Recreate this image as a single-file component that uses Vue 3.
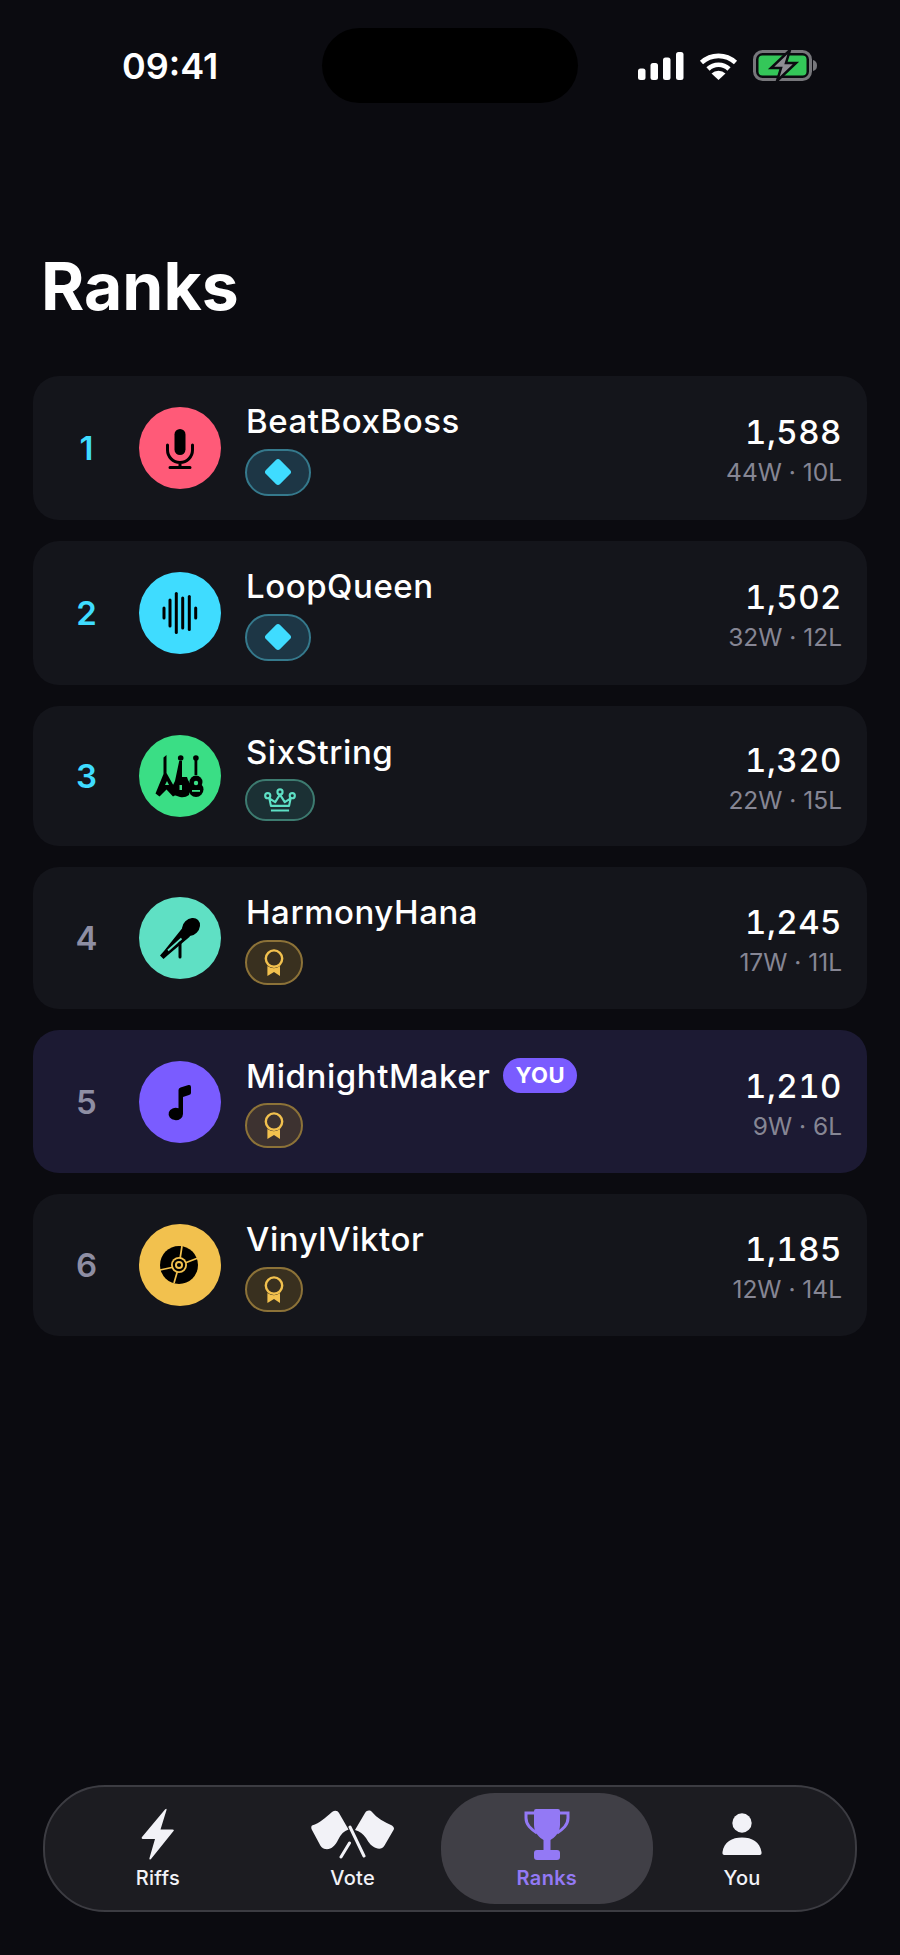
<script setup>
const players = [
  { rank: 1, name: 'BeatBoxBoss', score: '1,588', record: '44W · 10L', color: '#ff5a78', icon: 'mic', badge: 'diamond', height: 144, top: true },
  { rank: 2, name: 'LoopQueen', score: '1,502', record: '32W · 12L', color: '#3fdcff', icon: 'wave', badge: 'diamond', height: 144, top: true },
  { rank: 3, name: 'SixString', score: '1,320', record: '22W · 15L', color: '#3ade85', icon: 'guitars', badge: 'crown', height: 140, top: true },
  { rank: 4, name: 'HarmonyHana', score: '1,245', record: '17W · 11L', color: '#5fe0c4', icon: 'handmic', badge: 'medal', height: 142 },
  { rank: 5, name: 'MidnightMaker', score: '1,210', record: '9W · 6L', color: '#7a5cff', icon: 'note', badge: 'medal', height: 143, me: true },
  { rank: 6, name: 'VinylViktor', score: '1,185', record: '12W · 14L', color: '#f2c14e', icon: 'disc', badge: 'medal', height: 142 },
];

const waveBars = [
  { x: 25, h: 5 },
  { x: 31, h: 13 },
  { x: 37.3, h: 19.5 },
  { x: 43.7, h: 15 },
  { x: 50.3, h: 16.5 },
  { x: 56.7, h: 5 },
];
</script>

<template>
  <div class="page">
    <header class="status">
      <span class="time">09:41</span>
      <div class="island"></div>
      <div class="status-icons">
        <svg width="46" height="28" viewBox="0 0 46 28" fill="#fff">
          <rect x="0" y="16.5" width="7.5" height="11.5" rx="2.5" />
          <rect x="12.5" y="11" width="7.5" height="17" rx="2.5" />
          <rect x="25" y="5.5" width="7.5" height="22.5" rx="2.5" />
          <rect x="38" y="0" width="7.5" height="28" rx="2.5" />
        </svg>
        <svg class="wifi" width="39" height="28" viewBox="0 0 39 28" fill="none" stroke="#fff" stroke-width="4.6">
          <path d="M2.5 10.5A25 25 0 0 1 36.5 10.5" />
          <path d="M9 17A15 15 0 0 1 30 17" />
          <path d="M19.5 28L12.5 21.5A10 10 0 0 1 26.5 21.5Z" fill="#fff" stroke="none" />
        </svg>
        <svg class="battery" width="64" height="31" viewBox="0 0 64 31">
          <rect x="1.5" y="1.5" width="56" height="28" rx="8" fill="none" stroke="#77777b" stroke-width="3" />
          <rect x="5.5" y="5.5" width="48" height="20" rx="4" fill="#34c759" />
          <path d="M60 10Q64 11 64 15.5Q64 20 60 21Z" fill="#77777b" />
          <path d="M37 0L18 18H28L24 31L43 13H33Z" fill="#8e8e93" stroke="#0b0b10" stroke-width="2.5" />
        </svg>
      </div>
    </header>

    <h1 class="title">Ranks</h1>

    <main class="list">
      <div
        v-for="p in players"
        :key="p.rank"
        class="row"
        :class="{ 'row-me': p.me }"
        :style="{ minHeight: p.height + 'px' }"
      >
        <span class="rank" :class="{ 'rank-top': p.top }">{{ p.rank }}</span>

        <div class="avatar" :style="{ background: p.color }">
          <svg width="82" height="82" viewBox="0 0 82 82">
            <g v-if="p.icon === 'mic'">
              <rect x="35.5" y="22" width="11" height="26" rx="5.5" />
              <path d="M28.5 38v5a12.5 12.5 0 0 0 25 0v-5M41 55.5V60M31 60.5H51" fill="none" stroke="#000" stroke-width="3" stroke-linecap="round" />
            </g>
            <g v-else-if="p.icon === 'wave'" stroke="#000" stroke-width="3" stroke-linecap="round">
              <line v-for="b in waveBars" :key="b.x" :x1="b.x" :x2="b.x" :y1="41 - b.h" :y2="41 + b.h" />
            </g>
            <g v-else-if="p.icon === 'guitars'">
              <path d="M24.5 22.5L27.5 20V38L39 58.5L34 61.5L27.5 54.5L20.5 61.5L16.5 58.5L24.5 39Z" />
              <path d="M40.2 26H43V42H48L49 45L52 50L50 60Q46 63 41 62L35 60L33 52L36 46Z" />
              <circle cx="41.7" cy="23" r="2.8" />
              <path d="M55.5 22H58.3V40H55.5Z" />
              <circle cx="56.9" cy="23" r="2.8" />
              <circle cx="57" cy="47" r="6.5" />
              <circle cx="57" cy="54.5" r="7.5" />
              <circle cx="57" cy="48" r="2.2" fill="#3ade85" />
              <rect x="53" y="55" width="8" height="1.8" fill="#3ade85" />
              <path d="M26 50L28 46L30 50Z" fill="#3ade85" />
              <path d="M40.5 50H43V55H40.5Z" fill="#3ade85" />
            </g>
            <g v-else-if="p.icon === 'handmic'">
              <ellipse cx="52" cy="30" rx="10" ry="8" transform="rotate(-45 52 30)" />
              <path d="M43 31.5L51 39.500L29 58L24.500 62L21 58.500L25 54Z" />
              <path d="M42.500 41.500L29 53.500" stroke="#5fe0c4" stroke-width="1.800" />
              <path d="M41 46V60" stroke="#000" stroke-width="3" stroke-linecap="round" />
            </g>
            <path
              v-else-if="p.icon === 'note'"
              d="M39.5 29Q39.5 27 41.5 26.5L49.5 24Q52 23.5 52 26V32Q52 33.5 50 34L44 36V53A7.2 6.2 0 1 1 39.5 47.2Z"
            />
            <g v-else-if="p.icon === 'disc'">
              <circle cx="40" cy="41" r="19" />
              <path d="M43 22L41 35M59 34L46 39M21 46L35 43M35 59L38.5 47" stroke="#f2c14e" stroke-width="1.7" />
              <circle cx="40" cy="41" r="8" fill="#f2c14e" />
              <circle cx="40" cy="41" r="6.2" />
              <circle cx="40" cy="41" r="4" fill="#f2c14e" />
              <circle cx="40" cy="41" r="2.1" />
            </g>
          </svg>
        </div>

        <div class="who">
          <div class="name-line">
            <span class="name">{{ p.name }}</span>
            <span v-if="p.me" class="you-tag">YOU</span>
          </div>
          <span class="badge" :class="'badge-' + p.badge">
            <svg v-if="p.badge === 'diamond'" width="30" height="30" viewBox="0 0 30 30">
              <rect x="5" y="5" width="20" height="20" rx="3" fill="#3fdcff" transform="rotate(45 15 15)" />
            </svg>
            <svg v-else-if="p.badge === 'crown'" width="32" height="24" viewBox="0 0 30 22" fill="none" stroke="#5ee0c5" stroke-width="2">
              <circle cx="3.5" cy="7" r="2.4" />
              <circle cx="15" cy="3.4" r="2.4" />
              <circle cx="26.5" cy="7" r="2.4" />
              <path d="M6.5 16.5L5 9.5L10.5 13L15 6L19.5 13L25 9.5L23.5 16.5ZM6.5 20.8H23.5" stroke-linejoin="round" />
            </svg>
            <svg v-else width="20" height="27" viewBox="0 0 20 27">
              <circle cx="10" cy="9.6" r="8.2" fill="none" stroke="#f2c14e" stroke-width="2.4" />
              <path d="M3.4 17Q10 21.5 16 17V27L10 23L3.4 27Z" fill="#f2c14e" />
            </svg>
          </span>
        </div>

        <div class="stats">
          <span class="score">{{ p.score }}</span>
          <span class="record">{{ p.record }}</span>
        </div>
      </div>
    </main>

    <nav class="tabs">
      <div class="tab">
        <div class="tab-icon">
          <svg width="33" height="52" viewBox="0 0 33 52" fill="#f2f2f7">
            <path d="M24 1.5L1 29Q0 31 2 31H14L8.5 50Q8 52.5 10 51L32.5 23Q33.5 21.5 31.5 21.5H19.5L25.5 2Q26 0 24 1.5Z" />
          </svg>
        </div>
        <span class="tab-label">Riffs</span>
      </div>
      <div class="tab">
        <div class="tab-icon">
          <svg width="83" height="49" viewBox="0 0 83 49" fill="#f2f2f7">
            <path d="M1 15.500C9 13 14 8 21 2C24 0 26.500 0.500 28 3L37.500 19.500C33 21 30 24 27 30C24 36 20 40 14 39C11 38.500 9.500 36 8 33L1 20Q-0.500 17 1 15.500Z" />
            <path d="M44 20L54 3C56 0 59 0 61 2C66 8 73 12 81 15.500Q84 17.500 82.500 20L73.500 35.500C71.500 39 68 39.500 65 38C60 36 58 33 55 28C52 24 49 21.500 44 20Z" />
            <path d="M39 17L53 46M38.500 33L30 47" fill="none" stroke="#f2f2f7" stroke-width="3" stroke-linecap="round" />
          </svg>
        </div>
        <span class="tab-label">Vote</span>
      </div>
      <div class="tab tab-active">
        <div class="tab-icon">
          <svg width="46" height="51" viewBox="0 0 46 51" fill="#9379f5">
            <path d="M10 2Q10 0 12 0H34Q36 0 36 2V16C36 24 30 29 26.500 31V42H19.500V31C16 29 10 24 10 16Z" />
            <rect x="10" y="41" width="26" height="10" rx="3" />
            <path d="M10 4H2V9C2 16 7 20 13 24M36 4H44V9C44 16 39 20 33 24" fill="none" stroke="#9379f5" stroke-width="3" />
          </svg>
        </div>
        <span class="tab-label">Ranks</span>
      </div>
      <div class="tab">
        <div class="tab-icon">
          <svg width="40" height="42" viewBox="0 0 40 42" fill="#f2f2f7">
            <circle cx="20" cy="10" r="9.700" />
            <path d="M2.500 42Q0 42 0.500 39C2 29 10 24.500 20 24.500C30 24.500 38 29 39.500 39Q40 42 37.500 42Z" />
          </svg>
        </div>
        <span class="tab-label">You</span>
      </div>
    </nav>
  </div>
</template>

<style scoped>
.page {
  width: 900px;
  min-height: 1955px;
  box-sizing: border-box;
  display: flex;
  flex-direction: column;
  padding-bottom: 43px;
  background: #0b0b10;
  color: #fff;
  font-family: Inter, "Liberation Sans", sans-serif;
}

.status {
  display: grid;
  grid-template-columns: 322px 256px 1fr;
  align-items: center;
  height: 75px;
  margin-top: 28px;
}

.time {
  padding-left: 122px;
  font-size: 36px;
  font-weight: 600;
}

.island {
  height: 75px;
  border-radius: 38px;
  background: #000;
}

.status-icons {
  display: flex;
  align-items: center;
  padding-left: 60px;
}

.wifi {
  margin-left: 15px;
}

.battery {
  margin-left: 15px;
}

.title {
  margin: 143px 0 50px 41px;
  font-size: 66px;
  line-height: 80px;
  font-weight: 700;
}

.list {
  display: flex;
  flex-direction: column;
  gap: 21px;
  margin: 0 33px;
}

.row {
  display: flex;
  align-items: center;
  gap: 24px;
  padding: 0 25px;
  box-sizing: border-box;
  border-radius: 26px;
  background: #14151b;
}

.row-me {
  background: #1c1a33;
}

.rank {
  width: 57px;
  text-align: center;
  font-size: 33px;
  font-weight: 600;
  color: #8e8ea3;
}

.rank-top {
  color: #3fdcff;
}

.avatar {
  width: 82px;
  height: 82px;
  flex-shrink: 0;
  border-radius: 50%;
}

.avatar svg {
  display: block;
}

.who {
  display: flex;
  flex-direction: column;
  align-items: flex-start;
  gap: 4px;
}

.name-line {
  display: flex;
  align-items: center;
  gap: 13px;
  box-sizing: border-box;
  height: 44px;
  padding: 0 0 3px 1px;
}

.name {
  font-size: 33px;
  letter-spacing: 0.55px;
  font-weight: 500;
}

.you-tag {
  padding: 0 12px;
  height: 35px;
  line-height: 35px;
  border-radius: 18px;
  background: #7a5cff;
  font-size: 22px;
  font-weight: 700;
  letter-spacing: 0.5px;
}

.badge {
  display: flex;
  align-items: center;
  justify-content: center;
  box-sizing: border-box;
  border: 2px solid;
  border-radius: 24px;
}

.badge-diamond {
  width: 66px;
  height: 47px;
  background: #1d3645;
  border-color: #35798c;
}

.badge-crown {
  width: 70px;
  height: 42px;
  background: #1b3034;
  border-color: #3d7b70;
}

.badge-medal {
  width: 58px;
  height: 45px;
  background: #39301f;
  border-color: #8c7238;
}

.row-me .badge-medal {
  background: #3d3230;
}

.stats {
  display: flex;
  flex-direction: column;
  align-items: flex-end;
  margin: 1px 0 0 auto;
}

.score {
  font-size: 33px;
  line-height: 42px;
  font-weight: 550;
  letter-spacing: 0.5px;
  font-variant-numeric: tabular-nums;
}

.record {
  margin-top: 5px;
  font-size: 24.5px;
  line-height: 28px;
  color: #868694;
}

.tabs {
  display: grid;
  grid-template-columns: repeat(4, 1fr);
  align-items: stretch;
  box-sizing: border-box;
  width: 814px;
  height: 127px;
  margin: auto 0 0 43px;
  padding: 6px 15.5px;
  border: 2px solid #3c3c42;
  border-radius: 62px;
  background: #1c1c21;
}

.tab {
  display: flex;
  flex-direction: column;
  align-items: center;
  padding-top: 15px;
  border-radius: 54px;
}

.tab-active {
  margin: 0 -8.5px 0 -9.5px;
  background: #403f46;
}

.tab-icon {
  display: flex;
  align-items: center;
  justify-content: center;
  height: 52px;
}

.tab-label {
  margin-top: 6px;
  font-size: 20px;
  line-height: 24px;
  letter-spacing: 0.3px;
  font-weight: 500;
  color: #f2f2f7;
}

.tab-active .tab-label {
  color: #9379f5;
  font-weight: 600;
}
</style>
